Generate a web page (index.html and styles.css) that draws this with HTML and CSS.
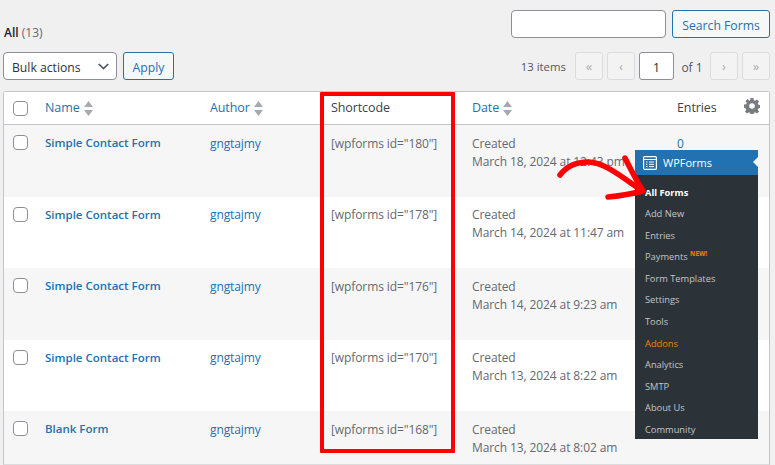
FILE: index.html
```html
<!DOCTYPE html>
<html lang="en">
<head>
<meta charset="utf-8">
<title>Forms</title>
<link rel="stylesheet" href="styles.css">
</head>
<body>
<div class="page">
  <div class="top">
    <div class="filter"><b>All</b> <span>(13)</span></div>
    <div class="search"><input class="field" type="text"><button class="btn search-btn">Search Forms</button></div>
  </div>
  <div class="actions">
    <div class="bulk">
      <div class="select"><span class="lift">Bulk actions</span><svg class="chev" width="11" height="7" viewBox="0 0 11 7"><path d="M.8 1l4.700 4.500L10.200 1" fill="none" stroke="#50575e" stroke-width="1.700"/></svg></div>
      <button class="btn apply">Apply</button>
    </div>
    <div class="pager">
      <span class="count">13 items</span>
      <span class="pg p-first">«</span><span class="pg p-prev">‹</span>
      <span class="cur">1</span><span class="of">of 1</span>
      <span class="pg p-next">›</span><span class="pg p-last">»</span>
    </div>
  </div>
  <div class="table">
    <div class="row head">
      <div class="cell cb"><i class="check"></i></div>
      <div class="cell link">Name <svg class="sort" width="9" height="15" viewBox="0 0 9 15"><path d="M4.500 0L9 6H0zM0 9h9l-4.500 6z" fill="#a7aaad"/></svg></div>
      <div class="cell link">Author <svg class="sort" width="9" height="15" viewBox="0 0 9 15"><path d="M4.500 0L9 6H0zM0 9h9l-4.500 6z" fill="#a7aaad"/></svg></div>
      <div class="cell dark">Shortcode</div>
      <div class="cell link">Date <svg class="sort" width="9" height="15" viewBox="0 0 9 15"><path d="M4.500 0L9 6H0zM0 9h9l-4.500 6z" fill="#a7aaad"/></svg></div>
      <div class="cell dark entries">Entries
        <svg class="gear" width="16" height="16" viewBox="0 0 20 20"><path fill="#787c82" fill-rule="evenodd" d="M8.200 0h3.600l.5 2.800 1.700.7 2.300-1.600 2.500 2.500-1.600 2.300.7 1.700 2.800.5v3.600l-2.800.5-.7 1.700 1.600 2.300-2.500 2.500-2.300-1.600-1.700.7-.5 2.800H8.200l-.5-2.800-1.700-.7-2.300 1.600-2.500-2.500 1.600-2.300-.7-1.700L0 11.800V8.200l2.800-.5.700-1.700-1.600-2.300 2.500-2.500L6.700 3.300l1-.5zM10 6.500a3.500 3.500 0 1 0 0 7 3.500 3.500 0 0 0 0-7z"/></svg>
      </div>
    </div>
    <div class="row alt">
      <div class="cell cb"><i class="check"></i></div>
      <div class="cell name">Simple Contact Form</div>
      <div class="cell link">gngtajmy</div>
      <div class="cell">[wpforms id="180"]</div>
      <div class="cell">Created<br>March 18, 2024 at 12:43 pm</div>
      <div class="cell link">0</div>
    </div>
    <div class="row">
      <div class="cell cb"><i class="check"></i></div>
      <div class="cell name">Simple Contact Form</div>
      <div class="cell link">gngtajmy</div>
      <div class="cell">[wpforms id="178"]</div>
      <div class="cell">Created<br>March 14, 2024 at 11:47 am</div>
      <div class="cell"></div>
    </div>
    <div class="row alt">
      <div class="cell cb"><i class="check"></i></div>
      <div class="cell name">Simple Contact Form</div>
      <div class="cell link">gngtajmy</div>
      <div class="cell">[wpforms id="176"]</div>
      <div class="cell">Created<br>March 14, 2024 at 9:23 am</div>
      <div class="cell"></div>
    </div>
    <div class="row">
      <div class="cell cb"><i class="check"></i></div>
      <div class="cell name">Simple Contact Form</div>
      <div class="cell link">gngtajmy</div>
      <div class="cell">[wpforms id="170"]</div>
      <div class="cell">Created<br>March 13, 2024 at 8:22 am</div>
      <div class="cell"></div>
    </div>
    <div class="row alt">
      <div class="cell cb"><i class="check"></i></div>
      <div class="cell name">Blank Form</div>
      <div class="cell link">gngtajmy</div>
      <div class="cell">[wpforms id="168"]</div>
      <div class="cell">Created<br>March 13, 2024 at 8:02 am</div>
      <div class="cell"></div>
    </div>
  </div>
</div>

<div class="redbox"></div>

<nav class="menu">
  <div class="menu-head">
    <svg width="14" height="14" viewBox="0 0 14 14"><rect x=".6" y=".6" width="12.800" height="12.800" rx="1" fill="none" stroke="#fff" stroke-width="1.200"/><path d="M1 3.500h12M3 6h1.500M6 6h5M3 8.300h1.500M6 8.300h5M3 10.600h1.500M6 10.600h5" stroke="#fff" stroke-width="1"/></svg>
    <span>WPForms</span>
  </div>
  <ul class="menu-list">
    <li class="on">All Forms</li>
    <li>Add New</li>
    <li>Entries</li>
    <li>Payments <sup>NEW!</sup></li>
    <li>Form Templates</li>
    <li>Settings</li>
    <li>Tools</li>
    <li class="hl">Addons</li>
    <li>Analytics</li>
    <li>SMTP</li>
    <li>About Us</li>
    <li>Community</li>
  </ul>
</nav>

<svg class="arrow" width="100" height="60" viewBox="0 0 100 60">
  <path d="M14 27C20 19 30 14 42 14C58 14 76 29 95 42" fill="none" stroke="#f00" stroke-width="5.500" stroke-linecap="round"/>
  <path d="M79 10C84 20 90 32 97 43C85 46 74 48 62 49" fill="none" stroke="#f00" stroke-width="5.500" stroke-linecap="round" stroke-linejoin="round"/>
</svg>
</body>
</html>
```

FILE: styles.css
```css
* { box-sizing: border-box; }
html, body { margin: 0; height: 465px; overflow: hidden; }
body {
  background: #f0f0f1;
  font-family: "Open Sans", "Noto Sans", sans-serif;
  font-size: 12px;
  color: #50575e;
  position: relative;
}
.page { padding: 10px 5px 0 3px; }
.top { display: flex; justify-content: space-between; align-items: flex-end; height: 28px; }
.filter { padding-left: 1px; line-height: 16px; margin-bottom: -3px; color: #646970; font-size: 12px; }
.filter b { color: #1d2327; font-weight: 600; }
.search { display: flex; gap: 6px; }
.field { width: 155px; height: 28px; background: #fff; border: 1px solid #8c8f94; border-radius: 4px; padding: 0; }
.btn {
  height: 28px;
  border: 1px solid #2271b1;
  border-radius: 3px;
  background: #f6f7f7;
  color: #2271b1;
  font: 12.200px "Open Sans", "Noto Sans", sans-serif;
  padding: 2px 0 0;
}
.search-btn { width: 98px; }
.actions { display: flex; justify-content: space-between; align-items: center; margin-top: 14px; height: 28px; }
.bulk { display: flex; gap: 6px; }
.select {
  width: 114px; height: 28px;
  background: #fff; border: 1px solid #8c8f94; border-radius: 4px;
  display: flex; align-items: center; justify-content: space-between;
  padding: 0 7px 0 8px;
  font-size: 12.200px; color: #2c3338;
}
.lift { padding-top: 2px; }
.apply { width: 51px; }
.pager { display: flex; align-items: center; gap: 4px; }
.count { margin-right: 5px; font-size: 11.400px; padding-top: 1px; }
.pg {
  width: 28px; height: 28px;
  background: #f3f3f4; border: 1px solid #dcdcde; border-radius: 3px;
  display: flex; align-items: center; justify-content: center;
  color: #a7aaad; font-size: 13px;
}
.cur {
  width: 35px; height: 28px;
  background: #fff; border: 1px solid #8c8f94; border-radius: 3px;
  display: flex; align-items: center; justify-content: center;
  color: #2c3338; font-size: 13px; padding-top: 1px;
}
.of { width: 28px; text-align: center; font-size: 12px; padding-top: 2px; }
.table {
  margin-top: 11px;
  width: 767px;
  background: #fff;
  border: 1px solid #c3c4c7;
  border-bottom-color: #dcdcde;
  border-radius: 3px 3px 0 0;
}
.row {
  display: grid;
  grid-template-columns: 41px 165px 121px 141px 205px 1fr;
  height: 71.600px;
}
.row.alt { background: #f6f6f6; }
.row.head { height: 33px; background: #fff; border-bottom: 1px solid #c3c4c7; align-items: center; }
.row.head .cell { padding: 0; font-size: 12.500px; display: flex; align-items: center; gap: 4px; }
.row:last-child { height: 53px; }
.cell { padding-top: 9.500px; line-height: 18px; font-size: 12px; letter-spacing: -.1px; color: #646970; white-space: nowrap; }
.row.head .cb, .cb { padding: 0 0 0 9px; }
.row:not(.head) .cb { padding-top: 10px; }
.check { display: block; width: 15px; height: 15px; background: #fff; border: 1px solid #8c8f94; border-radius: 4px; }
.row .link { color: #2271b1; }
.row .dark { color: #3c434a; }
.row .name { color: #2271b1; font-weight: 600; font-size: 11.500px; letter-spacing: 0; padding-top: 9px; }
.row.head .entries { justify-content: space-between; padding-right: 9px; }
.sort { display: block; }
.gear { display: block; margin-top: -4px; }
.redbox {
  position: absolute; left: 320px; top: 92px;
  width: 135px; height: 361px;
  border: 4px solid #f00; border-radius: 1px;
}
.menu {
  position: absolute; left: 635px; top: 150px;
  width: 123px; height: 289px;
  background: #2c3338;
  color: #c3c4c7;
}
.menu-head {
  height: 25px; background: #2271b1; color: #fff;
  display: flex; align-items: center; gap: 6px;
  padding-left: 8px; font-size: 11px;
  position: relative;
}
.menu-head::after {
  content: ""; position: absolute; right: 0; top: 7px;
  border: 5px solid transparent; border-right-color: #f6f6f6; border-left-width: 0;
}
.menu-list { list-style: none; margin: 6.500px 0 0; padding: 0; }
.menu-list li { height: 21.600px; line-height: 21.600px; padding-left: 10px; font-size: 9.300px; white-space: nowrap; }
.menu-list .on { color: #fff; font-weight: 700; }
.menu-list .hl { color: #f18200; }
.menu-list sup { color: #f18200; font-size: 6.500px; font-weight: 700; line-height: 0; }
.arrow { position: absolute; left: 546px; top: 148px; }
```
